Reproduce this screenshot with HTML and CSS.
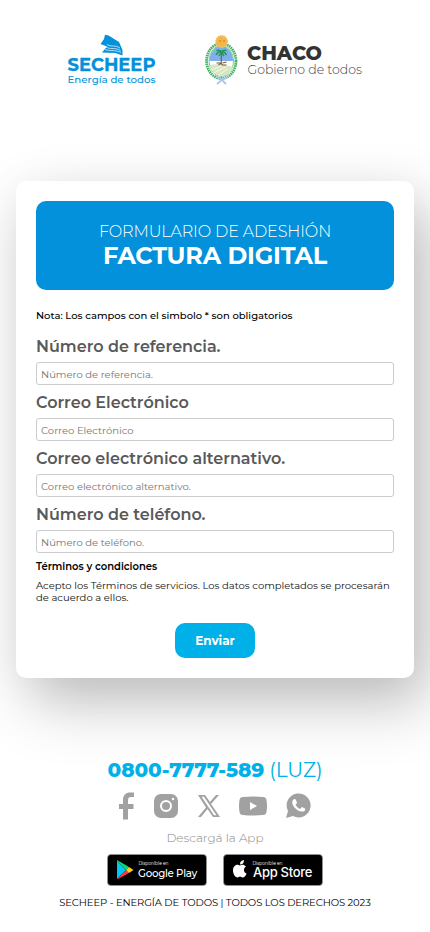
FILE: index.html
```html
<!DOCTYPE html>
<html lang="es">
<head>
<meta charset="utf-8">
<meta name="viewport" content="width=device-width, initial-scale=1">
<title>SECHEEP - Factura digital</title>
<link rel="stylesheet" href="styles.css">
</head>
<body>
<header class="header">
  <svg class="logo-secheep" width="90" height="54" viewBox="0 0 90 54">
    <path fill="#0291da" d="M38 1.700l3.500.8 10.500 6.500 3.500 8v5.500l-7-2.500-13.500-.5 5-6-6.500-2.500 3.500-5z"/>
    <path fill="none" stroke="#fff" stroke-width=".7" d="M40 11.500c5 3 8 0 13 3.500M39 14c5 3 9 0 14.500 3.500M38 16.500c6 2 10 0 16 3"/>
    <text class="brand" x=".5" y="38" textLength="88" lengthAdjust="spacingAndGlyphs">SECHEEP</text>
    <text class="brand-sub" x=".5" y="49.700" textLength="88" lengthAdjust="spacingAndGlyphs">Energía de todos</text>
  </svg>
  <svg class="logo-chaco" width="160" height="54" viewBox="0 0 160 54">
    <ellipse cx="17.300" cy="28" rx="14.700" ry="17.500" fill="none" stroke="#45b366" stroke-width="2.800" stroke-dasharray="1.600 .6"/>
    <ellipse cx="17.300" cy="28" rx="12.300" ry="15.500" fill="#fff" stroke="#69b978" stroke-width=".8"/>
    <path fill="#7fb0e8" d="M5.500 28a11.800 15 0 0 1 23.600 0z"/>
    <path fill="#d9e6c2" d="M5.500 32c9-2 17 0 23.500 2-2 6-6 9-11.500 9S7 39 5.500 32z"/>
    <path stroke="#f6faeb" fill="none" d="M7.500 37l10-4m-8 7l12-6m-7 8l9-6"/>
    <path stroke="#80593c" stroke-width="1.100" fill="none" d="M17.300 19v12M12.500 30h4l2 2h4M14.500 32l3-2m1 0l4-1"/>
    <path stroke="#259657" stroke-width="1.500" fill="none" d="M12 22q2-4 5-3.500Q20.500 18 22.500 22M12.500 17.500q4-1 4.500 1.500Q19.500 16.500 22.500 17.500M15 23l2.300-4 2.700 4"/>
    <circle cx="17.600" cy="8.500" r="5.700" fill="#f5b54b" stroke="#f2c060" stroke-width="1.500" stroke-dasharray="1.500 .7"/>
    <path stroke="#b87923" stroke-width=".8" d="M15 8h2m2 0h2"/>
    <path fill="none" stroke="#a5c9ee" stroke-width="1.800" d="M12 44l5 2 5 5m2-7l-5 2-6 5"/>
    <text class="chaco" x="43" y="27.300" textLength="75" lengthAdjust="spacingAndGlyphs">CHACO</text>
    <text class="chaco-sub" x="43.500" y="40.600" textLength="114.500" lengthAdjust="spacingAndGlyphs">Gobierno de todos</text>
  </svg>
</header>
<main class="card">
  <h1 class="banner">
    <span class="banner-top">FORMULARIO DE ADESHIÓN</span>
    <span class="banner-title">FACTURA DIGITAL</span>
  </h1>
  <p class="note">Nota: Los campos con el simbolo * son obligatorios</p>
  <form>
    <label for="ref">Número de referencia.</label>
    <input id="ref" placeholder="Número de referencia.">
    <label for="mail">Correo Electrónico</label>
    <input id="mail" placeholder="Correo Electrónico">
    <label for="alt">Correo electrónico alternativo.</label>
    <input id="alt" placeholder="Correo electrónico alternativo.">
    <label for="tel">Número de teléfono.</label>
    <input id="tel" placeholder="Número de teléfono.">
    <h2 class="terms-title">Términos y condiciones</h2>
    <p class="terms">Acepto los Términos de servicios. Los datos completados se procesarán de acuerdo a ellos.</p>
    <button class="send" type="button">Enviar</button>
  </form>
</main>
<footer class="footer">
  <p class="phone"><strong>0800-7777-589</strong> <span>(LUZ)</span></p>
  <div class="social">
    <svg width="16" height="28" viewBox="0 0 16 28"><path d="M4 27.500V17H0v-5h4V8c0-5 3-7.500 7-7.500h4V5h-3c-2 0-3 1-3 3v4h5.500v5H9v10.500z"/></svg>
    <svg width="24" height="24" viewBox="0 0 24 24"><rect width="24" height="24" rx="7"/><circle cx="12" cy="12" r="5" fill="none" stroke="#fff" stroke-width="2"/><circle cx="19" cy="5" r="1.200" fill="#fff"/></svg>
    <svg width="22" height="22" viewBox="0 0 22 22"><path fill-rule="evenodd" d="M0 0h7l5 7 6-7h3l-8 9 9 13h-7l-5.500-8L3 22H0l8-9.500zm3.500 1.800L16 20.200h2.500L6 1.800z"/></svg>
    <svg width="28" height="20" viewBox="0 0 28 20"><path d="M4 1Q14 0 24 1q3 0 3.500 3 1 6 0 12-.5 3-3.500 3-10 1-20 0-3 0-3.500-3-1-6 0-12Q1 1 4 1z"/><path fill="#fff" d="M11 6l7 4-7 4z"/></svg>
    <svg width="25" height="25" viewBox="0 0 25 25"><path d="M0 25l2-7A12 12 0 1 1 7 23z"/><path fill="#fff" d="M7 7q2-2 3 0l1 3-1.500 2q2 3 4.500 4l2-2 3 1.500q1 1-.5 2.500c-5 3-15-6-11.500-11z"/></svg>
  </div>
  <p class="download">Descargá la App</p>
  <div class="stores">
    <svg width="100" height="32" viewBox="0 0 100 32">
      <rect class="badge" x=".5" y=".5" width="99" height="31" rx="3.500"/>
      <path fill="#00c8f5" d="M10 7v18l9-9z"/><path fill="#00dc76" d="M10 6l12 7-3 3-9-9z"/><path fill="#ff3548" d="M10 25l9-9 3 3-11 6z"/><path fill="#ffca28" d="M22 13l4.500 3-4.500 3-3-3z"/>
      <text class="small" x="31.500" y="11" textLength="30" lengthAdjust="spacingAndGlyphs">Disponible en</text>
      <text class="store" x="31" y="23" textLength="59" lengthAdjust="spacingAndGlyphs">Google Play</text>
    </svg>
    <svg width="100" height="32" viewBox="0 0 100 32">
      <rect class="badge" x=".5" y=".5" width="99" height="31" rx="3.500"/>
      <path fill="#fff" d="M17 11.500c-4-2-7 1-7 5 0 3 2 7 4.500 7l2.500-1 2.500 1c2 0 3.500-2 4-4-3-1-3.500-5-.5-7-2-2-4-2-6-1zm0-1c0-3 1.500-4 4-4.500 0 3-1.500 4.500-4 4.500z"/>
      <text class="small" x="29.500" y="11" textLength="30" lengthAdjust="spacingAndGlyphs">Disponible en</text>
      <text class="store store-apple" x="30" y="23.300" textLength="59" lengthAdjust="spacingAndGlyphs">App Store</text>
    </svg>
  </div>
  <p class="copy">SECHEEP - ENERGÍA DE TODOS | TODOS LOS DERECHOS 2023</p>
</footer>
</body>
</html>
```
FILE: styles.css
```css
* { box-sizing: border-box; }
body, h1, h2, p { margin: 0; }
body { height: 932px; overflow: hidden; background: #fff; color: #000; font-family: Montserrat, Inter, sans-serif; }
.header { height: 180.6px; padding-top: 33px; display: flex; justify-content: center; align-items: flex-start; gap: 47px; }
svg { display: block; overflow: visible; }
.brand { font-size: 18.5px; font-weight: 700; fill: #0291da; stroke: #0291da; stroke-width: .3; }
.brand-sub { font-size: 10px; font-weight: 500; fill: #0291da; }
.chaco { font-size: 19px; font-weight: 800; fill: #333; }
.chaco-sub { font-size: 12.5px; font-weight: 300; fill: #444; }
.card { width: 398px; height: 497px; margin: 0 auto; padding: 20px; border-radius: 10px; background: #fff; box-shadow: 15px 25px 60px rgba(0,0,0,.25), -5px 5px 50px rgba(0,0,0,.04); }
.banner { height: 89px; border-radius: 10px; background: #0291da; color: #fff; display: flex; flex-direction: column; align-items: center; padding-top: 20px; white-space: nowrap; }
.banner-top { font-size: 16px; line-height: 22px; font-weight: 300; letter-spacing: -.1px; }
.banner-title { font-size: 24px; line-height: 25px; font-weight: 700; letter-spacing: -.2px; }
.note { margin-top: 20.4px; font-size: 10px; line-height: 12px; font-weight: 500; white-space: nowrap; }
form { padding-top: 15px; display: flex; flex-direction: column; }
label { height: 20px; margin-bottom: 5px; font-size: 16px; line-height: 20px; font-weight: 600; color: #58595b; white-space: nowrap; }
input { width: 100%; height: 23px; margin: 0 0 8px; padding: 2px 4px 0; border: 1px solid #ccc; border-radius: 3px; background: #fff; font: 400 10px Montserrat, Inter, sans-serif; }
input::placeholder { color: #757575; opacity: 1; }
.terms-title { font-size: 10px; line-height: 12px; font-weight: 600; white-space: nowrap; }
.terms { margin-top: 7px; font-size: 10px; line-height: 12px; color: #111; }
.send { width: 80px; height: 35px; margin: 18.6px auto 0; padding: 0; border: 0; border-radius: 10px; background: #00b0e8; color: #fff; font: 700 12px Montserrat, Inter, sans-serif; }
.footer { padding-top: 80.4px; display: flex; flex-direction: column; align-items: center; }
.phone { font-size: 20px; line-height: 25px; color: #00b0e8; white-space: nowrap; letter-spacing: -.1px; }
.phone strong { font-weight: 800; }
.social { height: 28px; margin-top: 9px; display: flex; align-items: center; gap: 19.3px; fill: #a1a1a1; }
.download { margin-top: 10px; font-size: 12px; line-height: 16px; font-weight: 300; color: #888; }
.stores { margin-top: 8px; display: flex; gap: 16px; }
.badge { fill: #000; stroke: #999; stroke-width: .7; }
.small { font-size: 5px; fill: #fff; }
.store { font-size: 11px; font-weight: 500; letter-spacing: -.3px; fill: #fff; }
.store-apple { font-family: Inter, sans-serif; font-size: 13px; }
.copy { margin-top: 10px; font-size: 10px; line-height: 13px; white-space: nowrap; letter-spacing: -.1px; }
```
